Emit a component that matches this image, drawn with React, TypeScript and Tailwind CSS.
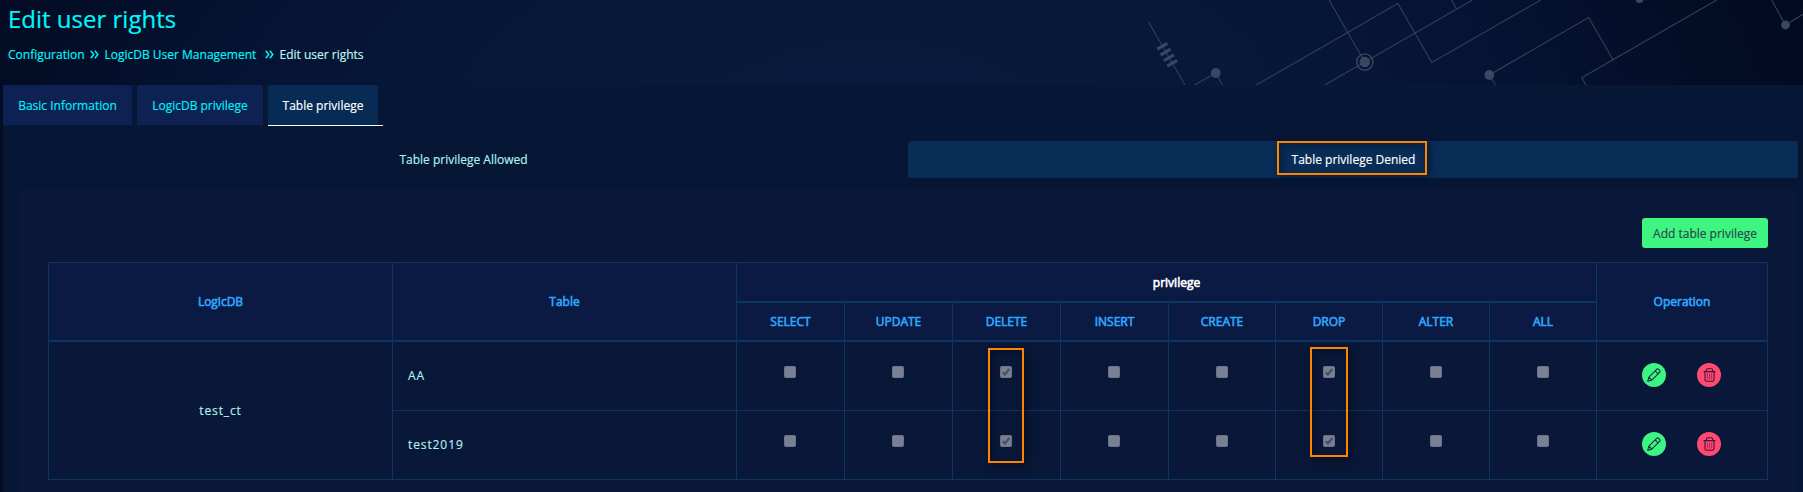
import React from "react";

const COLUMNS = ["SELECT", "UPDATE", "DELETE", "INSERT", "CREATE", "DROP", "ALTER", "ALL"];
const ROWS = [
  { table: "AA", granted: ["DELETE", "DROP"] },
  { table: "test2019", granted: ["DELETE", "DROP"] },
];

const LINE = "border-[#0d3562]";
const HEAD = "flex items-center justify-center bg-[#0b1a42] border-l text-[#2ea8ff] [-webkit-text-stroke:0.6px_currentColor]";

function Circuit() {
  return (
    <svg className="absolute right-0 top-0" width="683" height="85" viewBox="1120 0 683 85" fill="none" stroke="#333f58" strokeWidth="1.1">
      <path d="M1148.7 22.3 1185 85M1194.5 85 1215.8 73 1222.4 85M1256.3 85 1397.9 3.5 1431.8 62.5 1540.7 0M1324.7 85 1364.8 62 1472.4 0M1329 0 1364.8 62M1451.4 0 1456.4 8.8M1495.4 85 1489.3 75 1588.6 17.5 1613 59.7M1716.7 0 1581.7 77.8 1586 85M1771.6 0 1785.5 25 1803 14.3" />
      <path strokeWidth="3.2" d="M1157.3 49.2l10-5.8M1160.6 55l10-5.8M1163.9 60.6l10-5.8M1167.2 66.2l10-5.8" stroke="#3a4761" />
      <g fill="#3a4761" stroke="none">
        <circle cx="1215.8" cy="73" r="4.9" />
        <circle cx="1364.8" cy="62" r="5.3" />
        <circle cx="1489.3" cy="75" r="4.9" />
        <circle cx="1639.6" cy="-1" r="4" />
        <circle cx="1785.5" cy="25" r="4.4" />
      </g>
      <circle cx="1364.8" cy="62" r="8.1" stroke="#3a4761" strokeWidth="1.4" />
    </svg>
  );
}

function Chevrons() {
  return (
    <svg className="mb-px" width="9" height="9" viewBox="0 0 9 9" fill="none" stroke="#00f0f8" strokeWidth="1.5">
      <path d="M0.8 0.7 3.7 4.5 0.8 8.3M4.9 0.7 7.8 4.5 4.9 8.3" />
    </svg>
  );
}

function Check({ on }: { on: boolean }) {
  return (
    <span className="flex h-3 w-3 items-center justify-center rounded-[1.5px] border border-[#6c7386] bg-[#7a8093]">
      {on && (
        <svg className="shrink-0" width="8" height="8" viewBox="0 0 8 8" fill="none" stroke="#474f60" strokeWidth="2.3">
          <path d="M0.6 4.3 2.9 6.4 7.3 1" />
        </svg>
      )}
    </span>
  );
}

function Actions() {
  return (
    <div className="flex gap-[31px] pl-[45px] pt-[21px]">
      <span className="flex h-6 w-6 items-center justify-center rounded-full bg-[#3df583]">
        <svg width="14" height="14" viewBox="0 0 14 14" fill="none" stroke="#14303a" strokeWidth="1.1" strokeLinejoin="round">
          <path d="M0.7 13.3 1.9 9.2 9.7 1.4Q10.6 0.5 11.6 1.4L12.6 2.4Q13.5 3.4 12.6 4.3L4.8 12.1ZM8.2 2.9 11.1 5.8M1.9 9.2 4.8 12.1" />
        </svg>
      </span>
      <span className="flex h-6 w-6 items-center justify-center rounded-full bg-[#ff4b72]">
        <svg width="13" height="14" viewBox="0 0 13 14" fill="none" stroke="#4a1038" strokeWidth="1.1">
          <path d="M0.5 3.6H12.5M3.4 3.4V2Q3.4 0.7 4.7 0.7H8.3Q9.6 0.7 9.6 2V3.4M2 3.8V11.8Q2 13.3 3.4 13.3H9.6Q11 13.3 11 11.8V3.8" />
          <path d="M4.4 5.5V11.5M6.5 5.5V11.5M8.6 5.5V11.5" strokeWidth="1" stroke="#a02a55" />
        </svg>
      </span>
    </div>
  );
}

function Mark({ className }: { className: string }) {
  return (
    <div
      className={
        "pointer-events-none absolute border-2 border-[#ff8400] shadow-[3px_3px_8px_rgba(0,0,0,0.4),inset_3px_3px_8px_rgba(0,0,0,0.3)] " + className
      }
    />
  );
}

export default function App() {
  return (
    <div className="relative flex h-[492px] w-[1803px] flex-col overflow-hidden bg-[radial-gradient(930px_460px_at_870px_130px,#0a1a3c_0%,#081839_40%,#051434_68%,#030d26_90%,#020b22_100%)] font-['Open_Sans','Noto_Sans',sans-serif] text-[12px] leading-4 text-[#b0f2f0] [-webkit-text-stroke:0.15px_currentColor]">
      <Circuit />
      <header className="h-[85px] shrink-0 pl-2 text-[#00f8ff]">
        <h1 className="pt-[3px] text-[24px] leading-8">Edit user rights</h1>
        <nav className="flex items-center pt-3">
          <span className="w-[82px]">Configuration</span>
          <Chevrons />
          <span className="ml-[5.5px] w-[160.5px]">LogicDB User Management</span>
          <Chevrons />
          <span className="ml-[5.5px] text-[#c2f6f5]">Edit user rights</span>
        </nav>
      </header>
      <main className="ml-[3px] flex grow flex-col bg-[#061736]">
        <div className="flex h-[41px] shrink-0 gap-[5px] bg-[#071837] text-[#00f0fc]">
          <div className="flex h-10 w-[129px] items-center justify-center rounded-t-[3px] bg-[#0d2252] pt-0.5">Basic Information</div>
          <div className="flex h-10 w-[126px] items-center justify-center rounded-t-[3px] bg-[#0d2252] pt-0.5">LogicDB privilege</div>
          <div className="h-[41px] w-[115px] border-b border-white text-white">
            <div className="flex h-10 w-[110px] items-center justify-center rounded-t-[3px] bg-[#082b55] pt-0.5">Table privilege</div>
          </div>
        </div>
        <div className="ml-[15px] mr-[5px] mt-[15px] flex h-[37px] shrink-0">
          <div className="flex flex-1 items-center justify-center pl-px">Table privilege Allowed</div>
          <div className="flex flex-1 items-center justify-center rounded-[3px] bg-[#082d57] pl-px text-white">
            <div className="relative">
              <span className="relative z-10">Table privilege Denied</span>
              <Mark className="-left-[15px] -top-[11px] h-[34px] w-[150px]" />
            </div>
          </div>
        </div>
        <section className="ml-[15px] mr-[5px] mt-[10px] flex grow flex-col bg-[#091739] pl-[30px] pt-[30px]">
          <button className="ml-[1594px] h-[30px] w-[126px] shrink-0 rounded-[3px] bg-[#3df57f] pt-0.5 text-[#2b4650]">Add table privilege</button>
          <div className={"mt-[14px] grid w-[1720px] shrink-0 grid-cols-[344px_344px_108px_108px_108px_108px_107px_107px_107px_107px_171px] grid-rows-[40px_39px_69px_69px] border-r border-t " + LINE}>
            <div className={HEAD + " row-span-2 border-b-2 " + LINE}>LogicDB</div>
            <div className={HEAD + " row-span-2 border-b-2 " + LINE}>Table</div>
            <div className={"col-span-8 flex items-center justify-center border-b-2 border-l bg-[#0b1a42] pl-5 pt-0.5 text-white [-webkit-text-stroke:0.6px_currentColor] " + LINE}>privilege</div>
            <div className={HEAD + " row-span-2 border-b-2 " + LINE}>Operation</div>
            {COLUMNS.map((c) => (
              <div key={c} className={HEAD + " border-b-2 " + LINE}>{c}</div>
            ))}
            <div className={"row-span-2 flex items-center justify-center border-b border-l tracking-[0.9px] " + LINE}>test_ct</div>
            {ROWS.map((r, i) => (
              <React.Fragment key={r.table}>
                <div className={"flex items-center border-b border-l pl-[15px] tracking-[0.9px] " + LINE}>{r.table}</div>
                {COLUMNS.map((c) => (
                  <div key={c} className={"relative flex justify-center border-b border-l pr-px pt-6 " + LINE}>
                    <Check on={r.granted.includes(c)} />
                    {i === 0 && c === "DELETE" && <Mark className="left-[35px] top-[6px] z-10 h-[115px] w-9" />}
                    {i === 0 && c === "DROP" && <Mark className="left-[34px] top-[5px] z-10 h-[110px] w-[38px]" />}
                  </div>
                ))}
                <div className={"border-b border-l " + LINE}>
                  <Actions />
                </div>
              </React.Fragment>
            ))}
          </div>
        </section>
      </main>
    </div>
  );
}
